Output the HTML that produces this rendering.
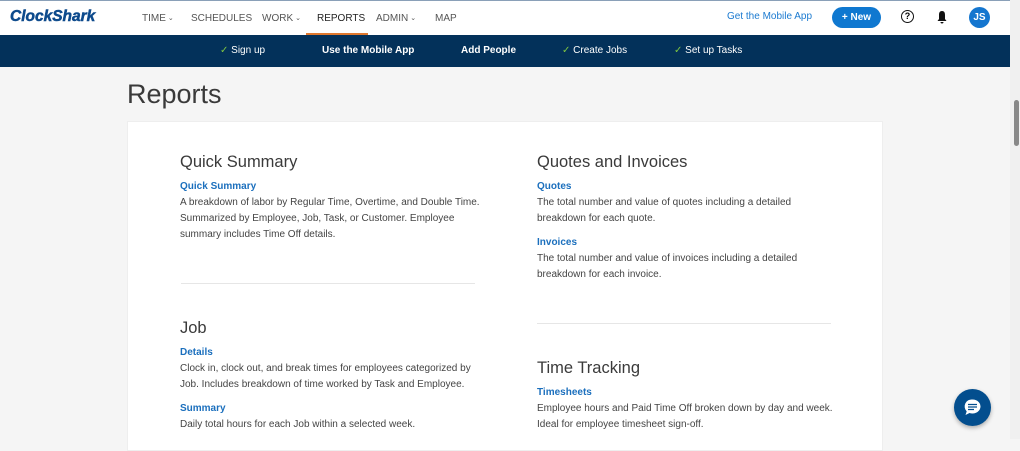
<!DOCTYPE html>
<html><head><meta charset="utf-8"><style>
*{margin:0;padding:0;box-sizing:border-box}
body{width:1020px;height:439px;overflow:hidden;background:#f5f5f5;font-family:"Liberation Sans",sans-serif;position:relative}
.top{position:absolute;left:0;top:0;width:1010px;height:35px;background:#fff;border-top:1px solid #8aa0b8}
.logo{position:absolute;left:10px;top:7px;font:italic 900 15.5px "Liberation Sans",sans-serif;color:#0d4a8c;letter-spacing:0px;-webkit-text-stroke:0.5px #0d4a8c}
.nav{position:absolute;top:12px;font-size:10px;color:#555}
.nav i{font-style:normal;font-size:7px;margin-left:2px;vertical-align:1px}
.act{color:#222}
.ul{position:absolute;left:306px;top:32px;width:62px;height:2px;background:#e0782e}
.sub{position:absolute;left:0;top:35px;width:1010px;height:32px;background:#03315a;color:#fff;font-size:10px}
.sub span{position:absolute;top:10px}
.ck{color:#7ec442;font-weight:normal}
.sc{position:absolute;right:0;top:0;width:10px;height:439px;background:#f0f0f0}
.thumb{position:absolute;right:1px;top:100px;width:5px;height:46px;background:#888;border-radius:3px}
h1{position:absolute;left:127px;top:79px;font-weight:normal;font-size:27px;color:#3a3a3a}
.card{position:absolute;left:127px;top:121px;width:756px;height:330px;background:#fff;border:1px solid #eee}
.h2{position:absolute;font-size:16.5px;color:#3a3a3a}
.l{position:absolute;font-size:10px;color:#1b6fbd;font-weight:bold}
.p{position:absolute;font-size:10px;color:#444;line-height:16px}
.hr{position:absolute;height:1px;background:#e6e6e6}
</style></head><body>
<div class="top">
<div class="logo">ClockShark</div>
<div class="nav" style="left:142px">TIME<i>⌄</i></div>
<div class="nav" style="left:191px">SCHEDULES</div>
<div class="nav" style="left:262px">WORK<i>⌄</i></div>
<div class="nav act" style="left:317px">REPORTS</div>
<div class="nav" style="left:376px">ADMIN<i>⌄</i></div>
<div class="nav" style="left:435px">MAP</div>
<div class="ul"></div>
<div class="nav" style="left:727px;top:10px;color:#1b7ad0;font-size:10px">Get the Mobile App</div>
<div style="position:absolute;left:832px;top:6px;width:49px;height:21px;border-radius:11px;background:#0f78d0;color:#fff;font-size:10px;font-weight:bold;text-align:center;line-height:21px">+ New</div>
<div style="position:absolute;left:901px;top:9px;width:13px;height:13px;border:1.5px solid #111;border-radius:50%;font-size:9px;font-weight:bold;text-align:center;line-height:10px">?</div>
<svg style="position:absolute;left:936px;top:9px" width="12" height="14" viewBox="0 0 12 14"><path d="M6 1C3.5 1 3 3 3 5v4L1.5 11h9L9 9V5C9 3 8.5 1 6 1z M4.5 12a1.5 1.5 0 0 0 3 0z" fill="#111"/></svg>
<div style="position:absolute;left:969px;top:6px;width:21px;height:21px;border-radius:50%;background:#1476cf;color:#fff;font-size:10px;font-weight:bold;text-align:center;line-height:21px">JS</div>
</div>
<div class="sub">
<span style="left:220px"><b class="ck">✓</b> Sign up</span>
<span style="left:322px;font-weight:bold">Use the Mobile App</span>
<span style="left:461px;font-weight:bold">Add People</span>
<span style="left:562px"><b class="ck">✓</b> Create Jobs</span>
<span style="left:674px"><b class="ck">✓</b> Set up Tasks</span>
</div>
<h1>Reports</h1>
<div class="card">
<div class="h2" style="left:52px;top:31px">Quick Summary</div>
<div class="l" style="left:52px;top:59px">Quick Summary</div>
<div class="p" style="left:52px;top:73px">A breakdown of labor by Regular Time, Overtime, and Double Time.<br>Summarized by Employee, Job, Task, or Customer. Employee<br>summary includes Time Off details.</div>
<div class="hr" style="left:53px;top:161px;width:294px"></div>
<div class="h2" style="left:52px;top:197px">Job</div>
<div class="l" style="left:52px;top:225px">Details</div>
<div class="p" style="left:52px;top:239px">Clock in, clock out, and break times for employees categorized by<br>Job. Includes breakdown of time worked by Task and Employee.</div>
<div class="l" style="left:52px;top:281px">Summary</div>
<div class="p" style="left:52px;top:295px">Daily total hours for each Job within a selected week.</div>
<div class="h2" style="left:409px;top:31px">Quotes and Invoices</div>
<div class="l" style="left:409px;top:59px">Quotes</div>
<div class="p" style="left:409px;top:73px">The total number and value of quotes including a detailed<br>breakdown for each quote.</div>
<div class="l" style="left:409px;top:115px">Invoices</div>
<div class="p" style="left:409px;top:129px">The total number and value of invoices including a detailed<br>breakdown for each invoice.</div>
<div class="hr" style="left:409px;top:201px;width:294px"></div>
<div class="h2" style="left:409px;top:237px">Time Tracking</div>
<div class="l" style="left:409px;top:265px">Timesheets</div>
<div class="p" style="left:409px;top:279px">Employee hours and Paid Time Off broken down by day and week.<br>Ideal for employee timesheet sign-off.</div>
</div>
<div style="position:absolute;left:954px;top:389px;width:37px;height:37px;border-radius:50%;background:#034e8e;box-shadow:0 2px 4px rgba(0,0,0,.3)">
<svg width="37" height="37" viewBox="0 0 37 37"><path d="M18.5 10.5a8 7 0 1 1-3 13.5l-4 2 1.2-3.6A7 7 0 0 1 18.5 10.5z" fill="#fff"/><path d="M14 15.5h9M14 18h9M14 20.5h6" stroke="#034e8e" stroke-width="1.3"/></svg></div>
<div class="sc"><div class="thumb"></div></div>
</body></html>
